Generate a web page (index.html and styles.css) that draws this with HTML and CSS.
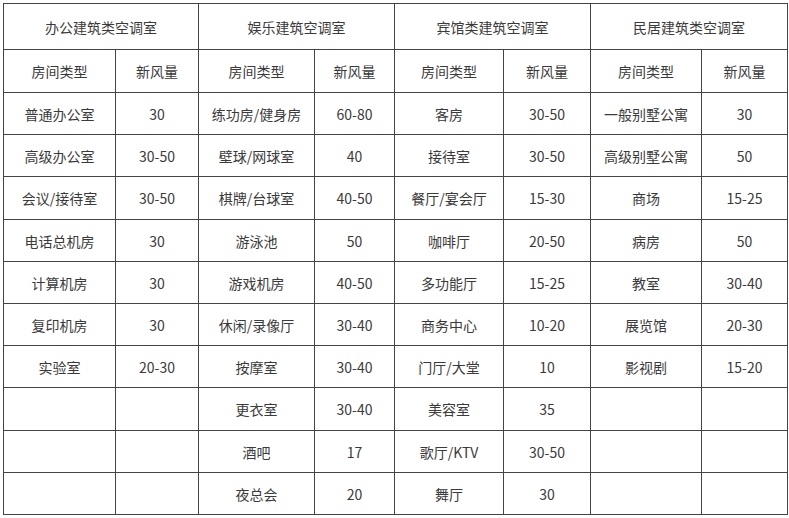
FILE: index.html
```html
<!DOCTYPE html>
<html lang="zh-CN">
<head>
<meta charset="utf-8">
<title>新风量表</title>
<link rel="stylesheet" href="styles.css">
</head>
<body>
<table class="air-table">
  <colgroup>
    <col class="c1"><col class="c2"><col class="c3"><col class="c4">
    <col class="c5"><col class="c6"><col class="c7"><col class="c8">
  </colgroup>
  <tr class="head">
    <td colspan="2">办公建筑类空调室</td>
    <td colspan="2">娱乐建筑空调室</td>
    <td colspan="2">宾馆类建筑空调室</td>
    <td colspan="2">民居建筑类空调室</td>
  </tr>
  <tr class="sub">
    <td>房间类型</td><td>新风量</td>
    <td>房间类型</td><td>新风量</td>
    <td>房间类型</td><td>新风量</td>
    <td>房间类型</td><td>新风量</td>
  </tr>
  <tr class="row">
    <td>普通办公室</td><td>30</td><td>练功房/健身房</td><td>60-80</td><td>客房</td><td>30-50</td><td>一般别墅公寓</td><td>30</td>
  </tr>
  <tr class="row">
    <td>高级办公室</td><td>30-50</td><td>壁球/网球室</td><td>40</td><td>接待室</td><td>30-50</td><td>高级别墅公寓</td><td>50</td>
  </tr>
  <tr class="row tall">
    <td>会议/接待室</td><td>30-50</td><td>棋牌/台球室</td><td>40-50</td><td>餐厅/宴会厅</td><td>15-30</td><td>商场</td><td>15-25</td>
  </tr>
  <tr class="row">
    <td>电话总机房</td><td>30</td><td>游泳池</td><td>50</td><td>咖啡厅</td><td>20-50</td><td>病房</td><td>50</td>
  </tr>
  <tr class="row">
    <td>计算机房</td><td>30</td><td>游戏机房</td><td>40-50</td><td>多功能厅</td><td>15-25</td><td>教室</td><td>30-40</td>
  </tr>
  <tr class="row">
    <td>复印机房</td><td>30</td><td>休闲/录像厅</td><td>30-40</td><td>商务中心</td><td>10-20</td><td>展览馆</td><td>20-30</td>
  </tr>
  <tr class="row">
    <td>实验室</td><td>20-30</td><td>按摩室</td><td>30-40</td><td>门厅/大堂</td><td>10</td><td>影视剧</td><td>15-20</td>
  </tr>
  <tr class="row tall">
    <td></td><td></td><td>更衣室</td><td>30-40</td><td>美容室</td><td>35</td><td></td><td></td>
  </tr>
  <tr class="row">
    <td></td><td></td><td>酒吧</td><td>17</td><td>歌厅/KTV</td><td>30-50</td><td></td><td></td>
  </tr>
  <tr class="row">
    <td></td><td></td><td>夜总会</td><td>20</td><td>舞厅</td><td>30</td><td></td><td></td>
  </tr>
</table>
</body>
</html>
```
FILE: styles.css
```css
html, body {
  margin: 0;
  padding: 0;
  background: #ffffff;
}
body {
  padding: 3px 0 0 3px;
  font-family: "Noto Sans CJK SC", "Noto Sans", sans-serif;
  font-size: 14px;
  color: #3a3a3a;
}
.air-table {
  border-collapse: collapse;
  table-layout: fixed;
  width: 784px;
}
.air-table td {
  border: 1px solid #444444;
  text-align: center;
  vertical-align: middle;
  padding: 0;
  line-height: 20px;
  white-space: nowrap;
}
.c1 { width: 112px; }
.c2 { width: 83px; }
.c3 { width: 116px; }
.c4 { width: 80px; }
.c5 { width: 109px; }
.c6 { width: 87px; }
.c7 { width: 111px; }
.c8 { width: 86px; }
.head td { height: 45px; }
.sub td { height: 42px; }
.row td { height: 41px; }
.row.tall td { height: 42px; }
```
